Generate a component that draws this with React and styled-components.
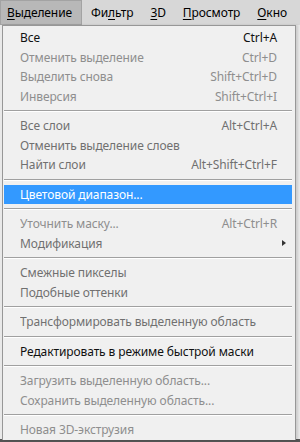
import React from "react";
import styled, { createGlobalStyle } from "styled-components";

const GlobalStyle = createGlobalStyle`
  html, body {
    margin: 0;
    padding: 0;
    background: #545454;
  }
  body {
    font-family: "Noto Sans", "Open Sans", sans-serif;
    font-size: 12px;
    letter-spacing: -0.1px;
    color: #000;
  }
`;

const topMenus = [
  { key: "sel", before: "", mark: "В", after: "ыделение", active: true },
  { key: "flt", before: "Фи", mark: "л", after: "ьтр" },
  { key: "3d", before: "", mark: "3", after: "D" },
  { key: "view", before: "", mark: "П", after: "росмотр" },
  { key: "win", before: "", mark: "О", after: "кно" },
];

const items = [
  { label: "Все", shortcut: "Ctrl+A", tone: "on" },
  { label: "Отменить выделение", shortcut: "Ctrl+D" },
  { label: "Выделить снова", shortcut: "Shift+Ctrl+D" },
  { label: "Инверсия", shortcut: "Shift+Ctrl+I" },
  { sep: true },
  { label: "Все слои", shortcut: "Alt+Ctrl+A", tone: "mid" },
  { label: "Отменить выделение слоев", tone: "mid" },
  { label: "Найти слои", shortcut: "Alt+Shift+Ctrl+F", tone: "mid" },
  { sep: true },
  { label: "Цветовой диапазон...", hot: true },
  { sep: true },
  { label: "Уточнить маску...", shortcut: "Alt+Ctrl+R" },
  { label: "Модификация", sub: true, tone: "mid" },
  { sep: true },
  { label: "Смежные пикселы", tone: "mid" },
  { label: "Подобные оттенки", tone: "mid" },
  { sep: true },
  { label: "Трансформировать выделенную область", tone: "mid" },
  { sep: true },
  { label: "Редактировать в режиме быстрой маски", tone: "on" },
  { sep: true },
  { label: "Загрузить выделенную область..." },
  { label: "Сохранить выделенную область..." },
  { sep: true },
  { label: "Новая 3D-экструзия" },
];

const toneColor = {
  on: "#111",
  mid: "#707070",
  off: "#8e8e8e",
};

const App = () => {
  return (
    <Screen>
      <GlobalStyle />
      <Desk>
        <MenuBar>
          {topMenus.map((m) => (
            <TopItem key={m.key} active={m.active}>
              {m.before}
              <Mark>{m.mark}</Mark>
              {m.after}
            </TopItem>
          ))}
        </MenuBar>
        <Dropdown>
          {items.map((it, i) =>
            it.sep ? (
              <Separator key={i} />
            ) : (
              <Row key={i} hot={it.hot} tone={it.tone || "off"}>
                <Label>{it.label}</Label>
                <Shortcut>{it.shortcut}</Shortcut>
                <ArrowCell>{it.sub && <Arrow />}</ArrowCell>
              </Row>
            )
          )}
        </Dropdown>
      </Desk>
    </Screen>
  );
};

const Screen = styled.div`
  width: 300px;
  height: 442px;
  overflow: hidden;
  background: #545454;
`;

const Desk = styled.div`
  height: 439px;
  display: flex;
  flex-direction: column;
  background: #e9e9e9;
`;

const MenuBar = styled.div`
  height: 25px;
  display: flex;
  align-items: stretch;
  background: #d7d7d7;
  flex-shrink: 0;
`;

const TopItem = styled.div`
  display: flex;
  align-items: center;
  padding: 0 8px 1px 8px;
  margin-right: 1px;
  color: #000;
  white-space: nowrap;
  background: ${(p) => (p.active ? "#b8b8b8" : "transparent")};
  box-shadow: ${(p) => (p.active ? "inset 0 0 0 1px #a3a3a3" : "none")};
  &:first-child {
    padding-left: 7px;
    padding-right: 10px;
  }
`;

const Mark = styled.span`
  text-decoration: underline;
  text-underline-offset: 2px;
`;

const Dropdown = styled.div`
  flex: 1;
  margin: 0 4px 0 2px;
  padding: 2px 1px 0 1px;
  background: #f0f0f0;
  border: 1px solid #979797;
  border-bottom: none;
  box-shadow: 2px 0 2px rgba(0, 0, 0, 0.12);
`;

const Row = styled.div`
  height: 19.5px;
  display: grid;
  grid-template-columns: 1fr auto 15px;
  align-items: center;
  padding-left: 16px;
  margin-right: 2px;
  white-space: nowrap;
  color: ${(p) => (p.hot ? "#fff" : toneColor[p.tone])};
  background: ${(p) => (p.hot ? "#3399ff" : "transparent")};
`;

const Label = styled.span`
  overflow: hidden;
`;

const Shortcut = styled.span`
  text-align: right;
`;

const ArrowCell = styled.span`
  display: flex;
  align-items: center;
  padding-left: 5px;
`;

const Arrow = styled.span`
  width: 0;
  height: 0;
  border-top: 3.5px solid transparent;
  border-bottom: 3.5px solid transparent;
  border-left: 4px solid #333;
`;

const Separator = styled.div`
  height: 10px;
  display: flex;
  flex-direction: column;
  justify-content: center;
  margin-right: 2px;
  &::before {
    content: "";
    display: block;
    border-top: 1px solid #a0a0a0;
    border-bottom: 1px solid #ffffff;
  }
`;

export default App;
